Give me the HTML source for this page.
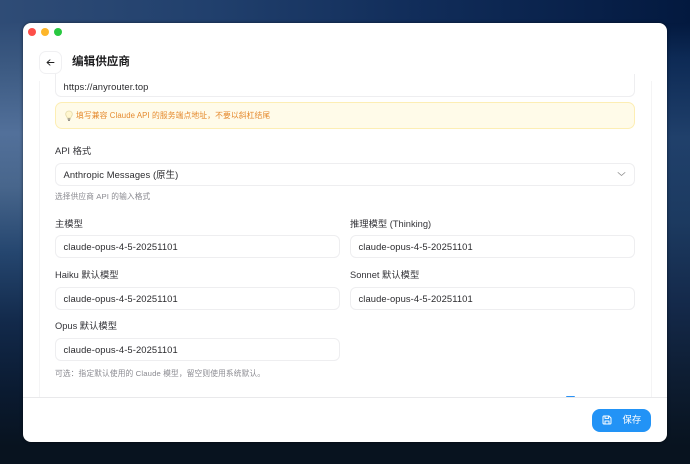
<!DOCTYPE html>
<html><head><meta charset="utf-8"><style>
*{box-sizing:border-box;margin:0;padding:0}
html,body{width:690px;height:464px;overflow:hidden}
body{position:relative;background:#08131f;font-family:"Liberation Sans","Noto Sans CJK SC",sans-serif}
.bg{position:absolute}
.win{position:absolute;left:23px;top:23px;width:644px;height:419px;background:#fff;border-radius:8px;overflow:hidden;box-shadow:0 0 3px rgba(0,0,0,.5)}
.abs{position:absolute;white-space:nowrap}
.dot{position:absolute;top:5px;width:8px;height:8px;border-radius:50%}
.input{position:absolute;height:23px;background:#fff;border:1px solid #eeeef0;border-radius:6px;font-size:9.4px;line-height:21px;padding-left:7.5px;color:#2b2b2e;letter-spacing:.1px}
.label{position:absolute;font-size:9.3px;line-height:12px;color:#333338;white-space:nowrap}
.hint{position:absolute;font-size:7.7px;line-height:10px;color:#8a8a90;white-space:nowrap;letter-spacing:.12px}
</style></head><body>
<div class="bg" style="left:0;top:0;width:100%;height:40px;background:linear-gradient(90deg,#2f4c76 0,#21406d 30%,#112d5a 60%,#03193f 100%)"></div>
<div class="bg" style="left:0;top:23px;width:30px;height:441px;background:linear-gradient(180deg,#2f4c76 0,#3c5a82 10%,#52709a 25%,#48668c 37%,#25466f 52%,#12294a 68%,#0a1a30 84%,#08131f 96%)"></div>
<div class="bg" style="left:660px;top:23px;width:30px;height:441px;background:linear-gradient(180deg,#03193f 0,#0d2a55 8%,#20406b 26%,#1c3a60 45%,#14294a 64%,#0d1c30 82%,#08131f 96%)"></div>
<div class="win">
<div class="dot" style="left:5px;background:#fd4f49"></div>
<div class="dot" style="left:18px;background:#fdb62a"></div>
<div class="dot" style="left:31px;background:#28c840"></div>

<div class="abs" style="left:16px;top:28px;width:23px;height:23px;border:1px solid #f0f0f2;border-radius:7px;background:#fff"></div>
<svg class="abs" style="left:23px;top:35px" width="9" height="9" viewBox="0 0 9 9" fill="none" stroke="#222" stroke-width=".9" stroke-linecap="round" stroke-linejoin="round"><path d="M8 4.5H1M4 1.8L1 4.5L4 7.2"/></svg>
<div class="abs" style="left:49px;top:30px;font-size:11.6px;line-height:18px;font-weight:700;color:#1b1b1d">编辑供应商</div>

<div class="abs" style="left:16px;top:58px;width:1px;height:316px;background:#f4f4f5"></div>
<div class="abs" style="left:628px;top:58px;width:1px;height:316px;background:#f4f4f5"></div>

<div class="input" style="left:32px;top:51px;width:580px;border-radius:0 0 6px 6px;border-top:0;height:23px;line-height:25px;background:transparent">https://anyrouter.top</div>

<div class="abs" style="left:32px;top:79px;width:580px;height:27px;background:#fffbe9;border:1px solid #fdeeb4;border-radius:7px"></div>
<svg class="abs" style="left:41px;top:87px" width="10" height="12" viewBox="0 0 10 12" fill="none"><path d="M5 1C3 1 1.7 2.4 1.7 4.2C1.7 5.7 3 6.4 3.3 8H6.7C7 6.4 8.3 5.7 8.3 4.2C8.3 2.4 7 1 5 1Z" fill="#fff6cf" stroke="#e3d9a8" stroke-width=".8"/><path d="M3.6 9H6.4M4 10.3H6" stroke="#77736a" stroke-width=".9"/></svg>
<div class="abs" style="left:53px;top:87px;font-size:7.8px;line-height:11px;color:#e58a2e;letter-spacing:.09px">填写兼容 Claude API 的服务端点地址，不要以斜杠结尾</div>

<div class="label" style="left:32px;top:122px">API 格式</div>
<div class="input" style="left:32px;top:140px;width:580px">Anthropic Messages (原生)</div>
<svg class="abs" style="left:594px;top:148px" width="9" height="6" viewBox="0 0 9 6" fill="none" stroke="#8a8a8a" stroke-width=".8" stroke-linecap="round" stroke-linejoin="round"><path d="M1 1.5L4.5 4.5L8 1.5"/></svg>
<div class="hint" style="left:32px;top:169px">选择供应商 API 的输入格式</div>

<div class="label" style="left:32px;top:195px">主模型</div>
<div class="label" style="left:327px;top:195px">推理模型 (Thinking)</div>
<div class="input" style="left:32px;top:212px;width:285px">claude-opus-4-5-20251101</div>
<div class="input" style="left:327px;top:212px;width:285px">claude-opus-4-5-20251101</div>

<div class="label" style="left:32px;top:246px">Haiku 默认模型</div>
<div class="label" style="left:327px;top:246px">Sonnet 默认模型</div>
<div class="input" style="left:32px;top:263.5px;width:285px">claude-opus-4-5-20251101</div>
<div class="input" style="left:327px;top:263.5px;width:285px">claude-opus-4-5-20251101</div>

<div class="label" style="left:32px;top:297px">Opus 默认模型</div>
<div class="input" style="left:32px;top:315px;width:285px">claude-opus-4-5-20251101</div>
<div class="hint" style="left:32px;top:346px;letter-spacing:.15px">可选：指定默认使用的 Claude 模型，留空则使用系统默认。</div>

<div class="abs" style="left:543px;top:373px;width:9px;height:2px;background:#2a92f5;border-radius:1px 1px 0 0"></div>
<div class="abs" style="left:0;top:374px;width:644px;height:1px;background:#e9e9eb"></div>

<div class="abs" style="left:569px;top:385.5px;width:59px;height:23.5px;background:#2293f6;border-radius:8px"></div>
<svg class="abs" style="left:579px;top:392px" width="10" height="10" viewBox="0 0 10 10" fill="none" stroke="#fff" stroke-width="1" stroke-linejoin="round"><path d="M1 2C1 1.4 1.4 1 2 1H7L9 3V8C9 8.6 8.6 9 8 9H2C1.4 9 1 8.6 1 8Z"/><path d="M3 1.2V3.4H6.6V1.2M3 9V6H7V9"/></svg>
<div class="abs" style="left:599.5px;top:390px;font-size:9.4px;line-height:14px;color:#fff">保存</div>
</div>
</body></html>
